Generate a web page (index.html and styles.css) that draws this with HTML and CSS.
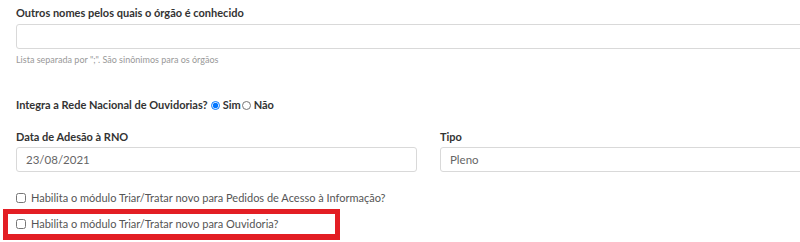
FILE: index.html
```html
<!DOCTYPE html>
<html lang="pt-BR">
<head>
<meta charset="utf-8">
<link rel="stylesheet" href="styles.css">
</head>
<body>
<form class="form">
  <div class="field">
    <label class="label">Outros nomes pelos quais o órgão é conhecido</label>
    <input class="input" type="text" value="">
    <p class="help">Lista separada por ";". São sinônimos para os órgãos</p>
  </div>

  <div class="radio-row">
    <span class="label inline">Integra a Rede Nacional de Ouvidorias?</span>
    <label class="radio-opt"><input type="radio" name="rno" checked>Sim</label>
    <label class="radio-opt"><input type="radio" name="rno">Não</label>
  </div>

  <div class="cols">
    <div class="field">
      <label class="label">Data de Adesão à RNO</label>
      <input class="input tight" type="text" value="23/08/2021">
    </div>
    <div class="field">
      <label class="label">Tipo</label>
      <input class="input tight" type="text" value="Pleno">
    </div>
  </div>

  <label class="check-row first"><input type="checkbox">Habilita o módulo Triar/Tratar novo para Pedidos de Acesso à Informação?</label>
  <div class="highlight">
    <label class="check-row"><input type="checkbox">Habilita o módulo Triar/Tratar novo para Ouvidoria?</label>
  </div>
</form>
</body>
</html>
```
FILE: styles.css
```css
html, body {
  margin: 0;
  padding: 0;
  background: #fff;
  overflow: hidden;
}
body {
  font-family: "Lato", "Open Sans", sans-serif;
  color: #333;
}
.form {
  width: 825px;
  padding: 5px 0 0 16px;
}
.label {
  display: block;
  font-size: 11px;
  font-weight: 700;
  line-height: 16px;
  color: #333;
}
.label.inline {
  display: inline;
}
.input {
  display: block;
  box-sizing: border-box;
  width: 100%;
  height: 25px;
  margin: 3px 0 0;
  padding: 0 9px;
  border: 1px solid #d9d9d9;
  border-radius: 3px;
  font-family: inherit;
  font-size: 11.5px;
  color: #666;
  background: #fff;
}
.input.tight {
  margin-top: 2px;
}
.help {
  margin: 5px 0 0;
  font-size: 9px;
  line-height: 12px;
  color: #999;
}
.radio-row {
  margin-top: 31px;
  display: flex;
  align-items: center;
  font-size: 11px;
  line-height: 16px;
}
.radio-opt {
  display: flex;
  align-items: center;
  font-weight: 700;
  color: #333;
}
.radio-opt input {
  width: 9px;
  height: 9px;
  margin: 0 3px 0 3px;
}
.radio-opt + .radio-opt input {
  margin-left: 1px;
}
.cols {
  display: grid;
  grid-template-columns: 401px 1fr;
  column-gap: 23px;
  margin-top: 16px;
}
.check-row {
  display: flex;
  align-items: center;
  font-size: 11px;
  line-height: 16px;
  color: #555;
}
.check-row input {
  width: 10px;
  height: 10px;
  margin: 0 5px 0 0;
}
.check-row.first {
  margin-top: 18px;
}
.highlight {
  box-sizing: border-box;
  width: 337px;
  margin: 3px 0 0 -13px;
  padding: 2px 0 2px 8px;
  border: 5px solid #e31e24;
  border-bottom-width: 6px;
}
```
